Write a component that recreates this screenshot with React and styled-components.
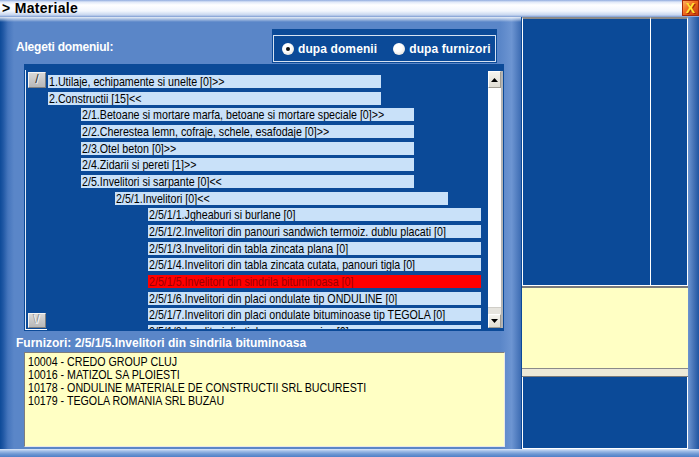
import React from 'react'
import styled, { createGlobalStyle } from 'styled-components'

const colors = {
  navy: '#0b4a98',
  panel: '#5a86c8',
  rowBlue: '#c9e1f9',
  rowRed: '#ff0000',
  yellow: '#ffffc4',
  beige: '#ece9d8',
}

const GlobalStyle = createGlobalStyle`
  html, body {
    margin: 0;
    padding: 0;
    overflow: hidden;
    background: ${colors.navy};
  }
  body {
    font-family: "Liberation Sans", Arial, sans-serif;
  }
`

const Window = styled.div`
  width: 699px;
  height: 457px;
  display: flex;
  flex-direction: column;
`

const TitleBar = styled.div`
  height: 17px;
  display: flex;
  align-items: flex-start;
  padding-left: 2px;
  box-sizing: border-box;
  background: linear-gradient(to bottom, #8eaade 0, #dfe8f8 2px, #ffffff 5px, #f2f6fd 11px, #c7d6ef 15px, #7b9bd2 17px);
`

const Title = styled.span`
  font-weight: bold;
  font-size: 14px;
  line-height: 16px;
  letter-spacing: 0.3px;
  color: #000;
`

const CloseButton = styled.div`
  margin-left: auto;
  width: 17px;
  height: 16px;
  box-sizing: border-box;
  border: 1px solid #a82a08;
  background: linear-gradient(135deg, #ffb060 0, #f06a1c 45%, #c83a10 100%);
  color: #ffe33a;
  font-weight: bold;
  font-size: 14px;
  line-height: 14px;
  text-align: center;
  text-shadow: 1px 1px 0 #a02a00;
`

const Body = styled.div`
  flex: 1;
  display: flex;
`

const LeftPanel = styled.div`
  width: 521px;
  display: flex;
  flex-direction: column;
  background:
    linear-gradient(to bottom, rgba(255, 255, 255, 0.85) 0, rgba(255, 255, 255, 0) 5px),
    linear-gradient(to right, #0d4a98 0, #1f57a4 3px, #4676bd 8px, ${colors.panel} 14px, ${colors.panel} 96%, #6d95d2 98.2%, #3d6cb3 100%);
`

const TopRow = styled.div`
  height: 47px;
  box-sizing: border-box;
  padding: 12px 24px 0 16px;
  display: flex;
  align-items: flex-start;
`

const Label = styled.div`
  height: 34px;
  display: flex;
  align-items: center;
  color: #fff;
  font-weight: bold;
  font-size: 12px;
  letter-spacing: -0.2px;
  padding-top: 1px;
  box-sizing: border-box;
  white-space: nowrap;
`

const RadioBox = styled.div`
  margin-left: auto;
  width: 225px;
  height: 34px;
  box-sizing: border-box;
  padding: 6px 1px 1px 1px;
  background: ${colors.navy};
`

const RadioFrame = styled.div`
  height: 100%;
  box-sizing: border-box;
  border: 1px solid #d6e2f2;
  display: flex;
  align-items: center;
  padding-left: 8px;
  white-space: nowrap;
`

const Radio = styled.span`
  position: relative;
  width: 12px;
  height: 12px;
  border-radius: 50%;
  flex-shrink: 0;
  background: radial-gradient(circle at 40% 35%, #ffffff 0, #ffffff 40%, #d9d6cc 100%);
  &::after {
    content: '';
    display: ${(p) => (p.$checked ? 'block' : 'none')};
    position: absolute;
    left: 4px;
    top: 4px;
    width: 4px;
    height: 4px;
    border-radius: 50%;
    background: #111;
  }
`

const RadioText = styled.span`
  margin: 0 ${(p) => (p.$last ? 0 : 16)}px 0 4px;
  color: #fff;
  font-weight: bold;
  font-size: 12px;
  letter-spacing: 0.1px;
`

const TreeFrame = styled.div`
  margin-left: 24px;
  width: 480px;
  height: 267px;
  box-sizing: border-box;
  padding: 6px 1px 1px 1px;
  background: ${colors.navy};
  display: flex;
  align-items: flex-start;
`

const Gutter = styled.div`
  width: 22px;
  height: 260px;
  box-sizing: border-box;
  border-left: 1px solid #e4ecf7;
  border-bottom: 1px solid #ffffff;
  padding: 2px 0 1px 2px;
  display: flex;
  flex-direction: column;
  justify-content: space-between;
`

const NodeButton = styled.div`
  width: 18px;
  height: ${(p) => p.$h}px;
  box-sizing: border-box;
  border: 1px solid;
  border-color: #f4f4f4 #808080 #808080 #f4f4f4;
  background: linear-gradient(to bottom, #d8d8d8, #b8b8b8);
  font-size: 12px;
  line-height: 13px;
  text-align: center;
  color: ${(p) => (p.$light ? '#f4f4f4' : '#2a2a2a')};
  text-shadow: ${(p) => (p.$light ? '-1px -1px 0 #8a8a8a' : '1px 1px 0 #eeeeee')};
`

const Rows = styled.div`
  width: 440px;
  height: 259px;
  box-sizing: border-box;
  padding-top: 5px;
  overflow: hidden;
`

const Row = styled.div`
  width: 333px;
  height: 13px;
  margin: 0 0 3.67px ${(p) => p.$indent}px;
  padding-left: 1px;
  box-sizing: border-box;
  background: ${(p) => (p.$selected ? colors.rowRed : colors.rowBlue)};
  color: ${(p) => (p.$selected ? '#9a0000' : '#000')};
  font-size: 13px;
  line-height: 13px;
  white-space: nowrap;
  overflow: hidden;
`

// the screen font is a condensed one; squeeze Liberation Sans to its width
const Narrow = styled.span`
  display: inline-block;
  white-space: nowrap;
  transform: scaleX(0.82);
  transform-origin: 0 50%;
`

const Scrollbar = styled.div`
  width: 15px;
  height: 257px;
  margin: 1px 0 0 1px;
  box-sizing: border-box;
  background: #ffffff;
  border-right: 2px solid #b4b4b4;
  display: flex;
  flex-direction: column;
`

const ArrowButton = styled.div`
  height: ${(p) => p.$h}px;
  box-sizing: border-box;
  border: 1px solid;
  border-color: #ffffff #a09c92 #a09c92 #ffffff;
  background: linear-gradient(to bottom, #f5f4ef, #e0ddd3);
  display: flex;
  align-items: center;
  justify-content: center;
`

const Thumb = styled.div`
  margin-top: auto;
  height: 6px;
  background: #e6e4de;
  border-top: 1px solid #d0cec8;
`

const FurnLabel = styled.div`
  height: 21px;
  box-sizing: border-box;
  padding: 4px 0 0 16px;
  color: #fff;
  font-weight: bold;
  font-size: 12px;
  line-height: 17px;
  white-space: nowrap;
`

const SupplierList = styled.div`
  margin-left: 24px;
  width: 481px;
  height: 95px;
  box-sizing: border-box;
  border: 1px solid;
  border-color: #7d7d7d #e8e8e8 #e8e8e8 #7d7d7d;
  padding: 2px 3px;
  background: ${colors.yellow};
`

const SupplierLine = styled.div`
  height: 13px;
  font-size: 13px;
  line-height: 13px;
  color: #000;
  white-space: nowrap;
`

const RightPanel = styled.div`
  width: 178px;
  display: flex;
`

const RightMain = styled.div`
  width: 167px;
  box-sizing: border-box;
  padding-left: 1px;
  display: flex;
  flex-direction: column;
  background: ${colors.navy};
`

const TopBoxes = styled.div`
  height: 269px;
  box-sizing: border-box;
  border-bottom: 1px solid #ffffff;
  display: flex;
`

const DarkBox = styled.div`
  width: ${(p) => (p.$w ? `${p.$w}px` : 'auto')};
  flex: ${(p) => (p.$w ? 'none' : 1)};
  box-sizing: border-box;
  border-top: 2px solid #8a8a8a;
  border-left: 1px solid #ffffff;
  border-right: ${(p) => (p.$edge ? '1px solid #ffffff' : 'none')};
  background: ${colors.navy};
`

const Strip = styled.div`
  height: ${(p) => p.$h}px;
  background: ${(p) => p.$bg};
  flex-shrink: 0;
`

const YellowBox = styled.div`
  height: 80px;
  background: ${colors.yellow};
`

const BottomBox = styled.div`
  flex: 1;
  box-sizing: border-box;
  border-left: 1px solid #ffffff;
  border-right: 1px solid #ffffff;
  border-bottom: 1px solid #ffffff;
  background: ${colors.navy};
`

const EdgeStrip = styled.div`
  width: 11px;
  background: linear-gradient(to right, #6d95d0 0, #3f6db2 60%, #1f56a2 100%);
`

const BottomBar = styled.div`
  height: 8px;
  background: linear-gradient(to bottom, #dde8f8 0, #a3c0e8 2px, #6e98d4 5px, #4f80c6 8px);
`

const tree = [
  { level: 1, text: '1.Utilaje, echipamente si unelte [0]>>' },
  { level: 1, text: '2.Constructii [15]<<' },
  { level: 2, text: '2/1.Betoane si mortare marfa, betoane si mortare speciale [0]>>' },
  { level: 2, text: '2/2.Cherestea lemn, cofraje, schele, esafodaje [0]>>' },
  { level: 2, text: '2/3.Otel beton [0]>>' },
  { level: 2, text: '2/4.Zidarii si pereti [1]>>' },
  { level: 2, text: '2/5.Invelitori si sarpante [0]<<' },
  { level: 3, text: '2/5/1.Invelitori [0]<<' },
  { level: 4, text: '2/5/1/1.Jgheaburi si burlane [0]' },
  { level: 4, text: '2/5/1/2.Invelitori din panouri sandwich termoiz. dublu placati [0]' },
  { level: 4, text: '2/5/1/3.Invelitori din tabla zincata plana [0]' },
  { level: 4, text: '2/5/1/4.Invelitori din tabla zincata cutata, panouri tigla [0]' },
  { level: 4, text: '2/5/1/5.Invelitori din sindrila bituminoasa [0]', selected: true },
  { level: 4, text: '2/5/1/6.Invelitori din placi ondulate tip ONDULINE [0]' },
  { level: 4, text: '2/5/1/7.Invelitori din placi ondulate bituminoase tip TEGOLA [0]' },
  { level: 4, text: '2/5/1/8.Invelitori din tigla arsa ceramica [0]' },
]

const suppliers = [
  '10004 - CREDO GROUP CLUJ',
  '10016 - MATIZOL SA PLOIESTI',
  '10178 - ONDULINE MATERIALE DE CONSTRUCTII SRL BUCURESTI',
  '10179 - TEGOLA ROMANIA SRL BUZAU',
]

const indentFor = (level) => Math.round(1 + (level - 1) * 33.4)

const Arrow = ({ up }) => (
  <svg width="7" height="4" viewBox="0 0 7 4">
    <polygon points={up ? '3.5,0 7,4 0,4' : '0,0 7,0 3.5,4'} fill="#000" />
  </svg>
)

const App = () => (
  <>
    <GlobalStyle />
    <Window>
      <TitleBar>
        <Title>&gt; Materiale</Title>
        <CloseButton>X</CloseButton>
      </TitleBar>
      <Body>
        <LeftPanel>
          <TopRow>
            <Label>Alegeti domeniul:</Label>
            <RadioBox>
              <RadioFrame>
                <Radio $checked />
                <RadioText>dupa domenii</RadioText>
                <Radio />
                <RadioText $last>dupa furnizori</RadioText>
              </RadioFrame>
            </RadioBox>
          </TopRow>
          <TreeFrame>
            <Gutter>
              <NodeButton $h={16}>/</NodeButton>
              <NodeButton $h={15} $light>\/</NodeButton>
            </Gutter>
            <Rows>
              {tree.map((node) => (
                <Row key={node.text} $indent={indentFor(node.level)} $selected={node.selected}>
                  <Narrow>{node.text}</Narrow>
                </Row>
              ))}
            </Rows>
            <Scrollbar>
              <ArrowButton $h={17}><Arrow up /></ArrowButton>
              <Thumb />
              <ArrowButton $h={14}><Arrow /></ArrowButton>
            </Scrollbar>
          </TreeFrame>
          <FurnLabel>Furnizori: 2/5/1/5.Invelitori din sindrila bituminoasa</FurnLabel>
          <SupplierList>
            {suppliers.map((s) => (
              <SupplierLine key={s}>
                <Narrow>{s}</Narrow>
              </SupplierLine>
            ))}
          </SupplierList>
        </LeftPanel>
        <RightPanel>
          <RightMain>
            <TopBoxes>
              <DarkBox $w={128} />
              <DarkBox $edge />
            </TopBoxes>
            <Strip $h={2} $bg="#7a7a7a" />
            <YellowBox />
            <Strip $h={1} $bg="#8a8a8a" />
            <Strip $h={7} $bg={colors.beige} />
            <Strip $h={1} $bg="#7a7a7a" />
            <BottomBox />
          </RightMain>
          <EdgeStrip />
        </RightPanel>
      </Body>
      <BottomBar />
    </Window>
  </>
)

export default App
